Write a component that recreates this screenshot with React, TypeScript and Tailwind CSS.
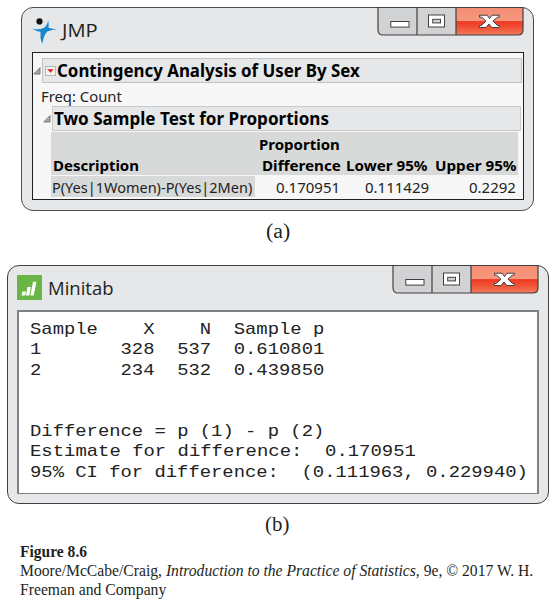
import { useLayoutEffect, useRef, useState, type ReactNode } from "react";

// One line of text, stretched or condensed horizontally to span `width` pixels.
function Fit({ width, className = "", children }: { width: number; className?: string; children: ReactNode }) {
  const ref = useRef<HTMLSpanElement>(null);
  const [scale, setScale] = useState(1);
  useLayoutEffect(() => {
    if (ref.current) setScale(width / ref.current.offsetWidth);
  }, [width]);
  return (
    <div className={`shrink-0 whitespace-pre ${className}`} style={{ width }}>
      <span ref={ref} className="inline-block origin-left" style={{ transform: `scaleX(${scale})` }}>
        {children}
      </span>
    </div>
  );
}

function WindowControls() {
  return (
    <svg width="147" height="29" viewBox="0 0 147 29" className="shrink-0">
      <defs>
        <linearGradient id="close" x1="0" y1="0" x2="0" y2="1">
          <stop offset="0" stopColor="#f58d74" />
          <stop offset="0.5" stopColor="#f6987c" />
          <stop offset="0.51" stopColor="#ee3a24" />
          <stop offset="0.7" stopColor="#f04e32" />
          <stop offset="1" stopColor="#f47b5c" />
        </linearGradient>
      </defs>
      <path d="M1 0.5H40V28H6Q1 28 1 22.5Z" fill="#d0d2d3" />
      <path d="M40 0.5H79V28H40Z" fill="#d0d2d3" />
      <path d="M79 0.5H146V23Q146 28 141 28H79Z" fill="url(#close)" />
      <path d="M1 0.5H146V23Q146 28 141 28H6Q1 28 1 22.5ZM40 0.5V28M79 0.5V28" fill="none" stroke="#414042" strokeWidth="1.2" />
      <rect x="13.8" y="14.5" width="18.2" height="5.6" fill="#fff" stroke="#414042" />
      <rect x="51.5" y="8" width="16" height="12" fill="#fff" stroke="#414042" />
      <rect x="55.7" y="12.3" width="7.8" height="3.6" fill="#d0d2d3" stroke="#414042" />
      <path
        d="M102.5 8.2H110.2L112.5 11.6L115 8.2H122.3V10.2H120.4L115.9 14.1L120.5 18.5H122.3V20.5H114.8L112 17L109 20.5H102.3V18.5H104.2L109 14.2L104.7 10.2H102.5Z"
        fill="#fff"
        stroke="#414042"
        strokeWidth="1"
      />
    </svg>
  );
}

function JmpLogo() {
  return (
    <svg width="27" height="28" viewBox="0 0 27 28" className="shrink-0">
      <circle cx="8.5" cy="4.4" r="3.1" fill="#111" />
      <path d="M0.8 11.4Q8 13.5 13.2 10.7Q16 8.7 17.2 3.4Q18 7.5 17.6 10.8Q21 12.1 26.3 12.2Q20.5 12.7 16.2 14.5Q12.7 18.5 11.2 27Q8.7 21 9.5 14.7Q5.2 14.2 0.8 11.4Z" fill="#1489cb" />
    </svg>
  );
}

function MinitabLogo() {
  return (
    <svg width="25" height="25" viewBox="0 0 25 25" className="shrink-0">
      <rect width="25" height="25" fill="#69b545" />
      <path d="M5.4 16.5H9L8.2 20.5H4.6ZM10.5 12H14L12.3 20.5H8.9ZM16 6.7H19.5L16.7 20.5H13.3Z" fill="#fff" />
    </svg>
  );
}

function Disclosure() {
  return (
    <svg width="8" height="8" viewBox="0 0 8 8" className="shrink-0">
      <path d="M7 0.7V7H0.8Z" fill="#aaa" stroke="#6d6d6d" strokeWidth="0.9" />
    </svg>
  );
}

export default function App() {
  return (
    <main className="h-[605px] w-[553px] overflow-hidden bg-white text-[#231f20]">
      <section className="ml-[21px] mt-[7px] flex h-[204px] w-[513px] flex-col rounded-[12px] border border-[#4d4d4f] bg-[#e6e7e8] font-['Noto_Sans','Open_Sans',sans-serif]">
        <header className="-mt-px flex h-[45px] justify-between pr-[9px]">
          <div className="flex pl-[9px] pt-[10px]">
            <JmpLogo />
            <Fit width={36} className="ml-[4px] h-[26px] font-['Open_Sans',sans-serif] text-[18.5px] leading-[26px]">JMP</Fit>
          </div>
          <WindowControls />
        </header>
        <div className="ml-[10px] h-[148px] w-[492px] border border-[#231f20] bg-[#f7f7f7] text-black">
          <div className="flex pt-[5px]">
            <div className="mr-px mt-[9px] h-2 w-2"><Disclosure /></div>
            <div className="flex h-[25px] w-[480px] items-center border border-[#c0c2c3] bg-[#e6e7e8]">
              <svg width="11" height="10" viewBox="0 0 11 10" className="ml-[2px] shrink-0">
                <rect x="0.5" y="0.5" width="10" height="9" fill="#f2f2f2" stroke="#b5b5b5" />
                <path d="M2.2 3.2H8.8L5.5 6.7Z" fill="#e02020" />
              </svg>
              <Fit width={303} className="ml-px text-[17.5px] font-bold leading-[23px]">Contingency Analysis of User By Sex</Fit>
            </div>
          </div>
          <Fit width={81} className="ml-[8px] h-[23px] text-[15px] leading-[26px] text-[#222]">Freq: Count</Fit>
          <div className="flex">
            <div className="ml-[10px] mr-px mt-[9px] h-2 w-2"><Disclosure /></div>
            <div className="flex h-[25px] w-[469px] items-center border border-[#c7c9ca] bg-[#e6e7e8]">
              <Fit width={275} className="ml-px text-[17.5px] font-bold leading-[23px]">Two Sample Test for Proportions</Fit>
            </div>
          </div>
          <div className="ml-[18px] mt-px flex h-[43px] w-[467px] flex-col bg-[#d8dad9] text-[15px] font-bold">
            <Fit width={81} className="ml-[208px] h-[21px] leading-[25px]">Proportion</Fit>
            <div className="flex h-[21px] leading-[25px]">
              <Fit width={86} className="ml-[2px]">Description</Fit>
              <Fit width={79} className="ml-[123px]">Difference</Fit>
              <Fit width={82} className="ml-[5px]">Lower 95%</Fit>
              <Fit width={82} className="ml-[7px]">Upper 95%</Fit>
            </div>
          </div>
          <div className="ml-[18px] mt-px flex h-[21px] text-[15px] leading-[23px] text-[#222]">
            <div className="w-[204px] bg-[#d8dad9] pl-px"><Fit width={200}>P(Yes|1Women)-P(Yes|2Men)</Fit></div>
            <Fit width={64} className="ml-[21px]">0.170951</Fit>
            <Fit width={64} className="ml-[25px]">0.111429</Fit>
            <Fit width={47} className="ml-[40px]">0.2292</Fit>
          </div>
        </div>
      </section>

      <Fit width={24} className="ml-[266px] h-[54px] font-['Liberation_Serif',serif] text-[20px] leading-[40px]">(a)</Fit>

      <section className="ml-[7px] flex h-[239px] w-[542px] flex-col rounded-[12px] border border-[#414042] bg-[#e6e7e8]">
        <header className="-mt-px flex h-[45px] justify-between pr-[9px]">
          <div className="flex pl-[9px] pt-[10px]">
            <MinitabLogo />
            <Fit width={66} className="ml-[6px] h-[26px] font-['Open_Sans',sans-serif] text-[18.5px] leading-[26px]">Minitab</Fit>
          </div>
          <WindowControls />
        </header>
        <div className="ml-[9px] flex h-[184px] w-[522px] flex-col border-2 border-b border-[#808184] bg-white pl-[11px] pt-[8px] font-['Liberation_Mono',monospace] text-[17px] leading-[20.4px] text-[#222]">
          <Fit width={294}>{"Sample    X    N  Sample p"}</Fit>
          <Fit width={294}>{"1       328  537  0.610801"}</Fit>
          <Fit width={294}>{"2       234  532  0.439850"}</Fit>
          <div className="h-[40.8px]" />
          <Fit width={294}>{"Difference = p (1) - p (2)"}</Fit>
          <Fit width={386}>{"Estimate for difference:  0.170951"}</Fit>
          <Fit width={498}>{"95% CI for difference:  (0.111963, 0.229940)"}</Fit>
        </div>
      </section>

      <Fit width={24} className="ml-[265px] h-[38px] font-['Liberation_Serif',serif] text-[20px] leading-[40px]">(b)</Fit>

      <footer className="ml-5 font-['Liberation_Serif',serif] text-[16px] leading-[19px]">
        <Fit width={67} className="font-bold">Figure 8.6</Fit>
        <Fit width={513}>Moore/McCabe/Craig, <i>Introduction to the Practice of Statistics</i>, 9e, © 2017 W. H.</Fit>
        <Fit width={146}>Freeman and Company</Fit>
      </footer>
    </main>
  );
}
